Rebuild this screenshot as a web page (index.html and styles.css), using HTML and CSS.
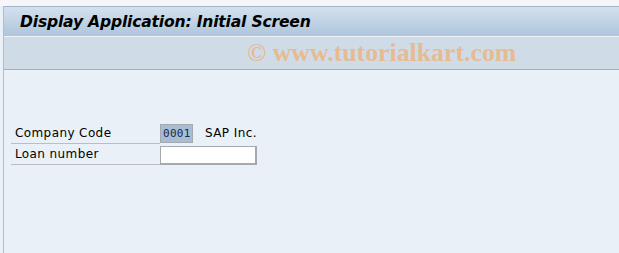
FILE: index.html
```html
<!DOCTYPE html>
<html>
<head>
<meta charset="utf-8">
<link rel="stylesheet" href="styles.css">
</head>
<body>
<div class="top-strip"></div>
<div class="frame">
  <div class="titlebar">
    <h1 class="title">Display Application: Initial Screen</h1>
  </div>
  <div class="toolbar">
    <span class="watermark">© www.tutorialkart.com</span>
  </div>
  <div class="content">
    <div class="row">
      <span class="label">Company Code</span>
      <span class="field field-short">0001</span>
      <span class="desc">SAP Inc.</span>
    </div>
    <div class="row">
      <span class="label">Loan number</span>
      <span class="field field-long"></span>
    </div>
  </div>
</div>
</body>
</html>
```
FILE: styles.css
```css
html, body {
  margin: 0;
  padding: 0;
  width: 619px;
  height: 253px;
  overflow: hidden;
  background: #e9f0f7;
}
.top-strip {
  height: 6px;
  background: #f4f6fa;
}
.frame {
  margin-left: 3px;
  border-left: 1px solid #b4bcc6;
  height: 247px;
  display: flex;
  flex-direction: column;
}
.titlebar {
  height: 29px;
  border-top: 1px solid #a6b4c6;
  background: linear-gradient(#d3e1ee, #afc5dc);
  display: flex;
  align-items: center;
}
.title {
  margin: 0 0 0 16px;
  font-family: "DejaVu Sans", sans-serif;
  font-weight: bold;
  font-style: italic;
  font-size: 15.6px;
  color: #000;
  letter-spacing: -0.2px;
}
.toolbar {
  height: 32px;
  border-top: 1px solid #eef3f8;
  border-bottom: 1px solid #a0afc1;
  background: #cfdce7;
  display: flex;
  align-items: center;
}
.watermark {
  margin-left: 243px;
  font-family: "Liberation Serif", serif;
  font-weight: bold;
  font-size: 25.8px;
  color: #e7bb92;
}
.content {
  flex: 1;
  background: #e9f0f7;
  padding: 54px 0 0 7px;
  font-family: "DejaVu Sans", sans-serif;
  font-size: 12px;
  letter-spacing: 0.4px;
  color: #000;
}
.row {
  display: flex;
  align-items: flex-end;
  margin-bottom: 1px;
}
.label {
  width: 149px;
  padding-left: 4px;
  border-bottom: 1px solid #b9bec4;
  box-sizing: border-box;
  height: 20px;
  line-height: 19px;
}
.field {
  box-sizing: border-box;
  height: 19px;
  border: 1px solid #a4a9ae;
  line-height: 17px;
  padding-left: 2px;
  font-family: "DejaVu Sans Mono", monospace;
  font-size: 11px;
  letter-spacing: 0.3px;
}
.field-short {
  width: 33px;
  background: #a7bdd6;
  color: #1a2a40;
  margin-bottom: 1px;
}
.field-long {
  width: 97px;
  background: #fff;
  border-color: #a6a9ac;
  border-width: 1px 2px 2px 1px;
}
.desc {
  margin-left: 12px;
  line-height: 19px;
  margin-bottom: 1px;
}
```
